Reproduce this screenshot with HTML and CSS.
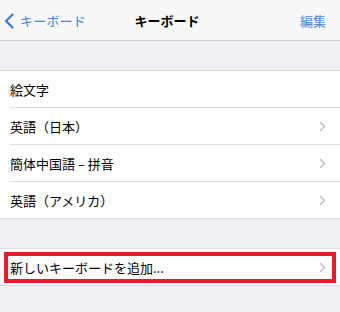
FILE: index.html
```html
<!DOCTYPE html>
<html lang="ja">
<head>
<meta charset="utf-8">
<link rel="stylesheet" href="styles.css">
</head>
<body>
<div class="nav">
  <div class="nav-left">
    <svg class="back" width="10" height="16" viewBox="0 0 10 16"><polyline points="8.5,1.5 2,8 8.5,14.5" fill="none" stroke="#3a7bd8" stroke-width="2.2" stroke-linecap="round" stroke-linejoin="round"/></svg>
    <span class="back-text">キーボード</span>
  </div>
  <div class="nav-title">キーボード</div>
  <div class="nav-right">編集</div>
</div>
<div class="gap"></div>
<div class="group">
  <div class="row"><div class="row-inner"><span>絵文字</span></div></div>
  <div class="row"><div class="row-inner"><span>英語（日本）</span><svg class="chev" width="7" height="11" viewBox="0 0 7 11"><polyline points="1,1 5.5,5.5 1,10" fill="none" stroke="#c4c4c8" stroke-width="1.6"/></svg></div></div>
  <div class="row"><div class="row-inner"><span>簡体中国語 – 拼音</span><svg class="chev" width="7" height="11" viewBox="0 0 7 11"><polyline points="1,1 5.5,5.5 1,10" fill="none" stroke="#c4c4c8" stroke-width="1.6"/></svg></div></div>
  <div class="row"><div class="row-inner"><span>英語（アメリカ）</span><svg class="chev" width="7" height="11" viewBox="0 0 7 11"><polyline points="1,1 5.5,5.5 1,10" fill="none" stroke="#c4c4c8" stroke-width="1.6"/></svg></div></div>
</div>
<div class="gap"></div>
<div class="group highlight-wrap">
  <div class="row"><div class="row-inner"><span>新しいキーボードを追加...</span><svg class="chev" width="7" height="11" viewBox="0 0 7 11"><polyline points="1,1 5.5,5.5 1,10" fill="none" stroke="#c4c4c8" stroke-width="1.6"/></svg></div></div>
  <div class="highlight"></div>
</div>
</body>
</html>
```
FILE: styles.css
```css
html, body {
  margin: 0;
  padding: 0;
}
body {
  background: #efeff4;
  font-family: "Noto Sans CJK JP", "Noto Sans", sans-serif;
  font-size: 13px;
  color: #000;
  width: 340px;
  height: 312px;
  overflow: hidden;
}
.nav {
  height: 40px;
  background: #f8f8f8;
  border-bottom: 1px solid #cfcfd3;
  display: grid;
  grid-template-columns: 1fr auto 1fr;
  align-items: center;
}
.nav-left {
  display: flex;
  align-items: center;
  padding-left: 4px;
  color: #4a84d6;
  font-size: 13px;
}
.back {
  margin-right: 6px;
  margin-top: 1px;
}
.back-text {
  letter-spacing: 0.2px;
}
.nav-title {
  font-weight: bold;
  font-size: 13px;
  padding-right: 6px;
}
.nav-right {
  text-align: right;
  padding-right: 14px;
  color: #4a84d6;
  font-size: 13px;
}
.gap {
  height: 29px;
}
.group {
  background: #fff;
  border-top: 1px solid #dcdce0;
  border-bottom: 1px solid #dcdce0;
}
.row {
  padding-left: 10px;
}
.row-inner {
  height: 36px;
  display: flex;
  align-items: center;
  justify-content: space-between;
  padding-right: 14px;
  border-bottom: 1px solid #dedee2;
}
.row:last-child .row-inner,
.row:nth-last-child(2) .row-inner {
  border-bottom: none;
}
.group > .row:not(:last-child) .row-inner {
  border-bottom: 1px solid #dedee2;
}
.highlight-wrap {
  position: relative;
}
.highlight-wrap .row-inner {
  border-bottom: none !important;
}
.highlight {
  position: absolute;
  left: 4px;
  top: 3px;
  width: 324px;
  height: 23px;
  border: 4px solid #e01f2d;
}
```
